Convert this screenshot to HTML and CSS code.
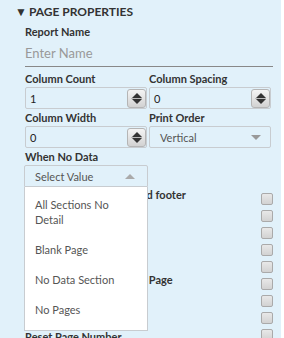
FILE: index.html
```html
<!DOCTYPE html>
<html lang="en">
<head>
  <meta charset="UTF-8">
  <title>Page Properties</title>
  <link rel="stylesheet" href="styles.css">
</head>
<body>

  <div class="panel">
    <div class="panel-title"><span class="caret">&#9660;</span>PAGE PROPERTIES</div>

    <div class="field">
      <label class="label">Report Name</label>
      <div class="text-input">Enter Name</div>
    </div>

    <div class="grid">
      <div class="field">
        <label class="label">Column Count</label>
        <div class="box">
          <span class="value">1</span>
          <span class="spinner"><i class="up"></i><i class="down"></i></span>
        </div>
      </div>
      <div class="field">
        <label class="label">Column Spacing</label>
        <div class="box">
          <span class="value">0</span>
          <span class="spinner"><i class="up"></i><i class="down"></i></span>
        </div>
      </div>
      <div class="field">
        <label class="label">Column Width</label>
        <div class="box">
          <span class="value">0</span>
          <span class="spinner"><i class="up"></i><i class="down"></i></span>
        </div>
      </div>
      <div class="field">
        <label class="label">Print Order</label>
        <div class="box select">
          <span class="value muted">Vertical</span>
          <span class="arrow-down"></span>
        </div>
      </div>
      <div class="field">
        <label class="label">When No Data</label>
        <div class="combo">
          <div class="box select open">
            <span class="value muted">Select Value</span>
            <span class="arrow-up"></span>
          </div>
          <ul class="dropdown">
            <li>All Sections No Detail</li>
            <li>Blank Page</li>
            <li>No Data Section</li>
            <li>No Pages</li>
          </ul>
        </div>
      </div>
    </div>

    <div class="checks">
      <div class="check-row"><span>Print all report header and footer</span><span class="checkbox"></span></div>
      <div class="check-row"><span>Ignore pagination</span><span class="checkbox"></span></div>
      <div class="check-row"><span>Float column footer</span><span class="checkbox"></span></div>
      <div class="check-row"><span>Title on new page</span><span class="checkbox"></span></div>
      <div class="check-row"><span>Summary on new page</span><span class="checkbox"></span></div>
      <div class="check-row"><span>Print Summary on a New Page</span><span class="checkbox"></span></div>
      <div class="check-row"><span>Summary with header</span><span class="checkbox"></span></div>
      <div class="check-row"><span>Keep together</span><span class="checkbox"></span></div>
      <div class="check-row last"><span>Reset Page Number</span><span class="checkbox"></span></div>
    </div>
  </div>

</body>
</html>
```

FILE: styles.css
```css
* {
  box-sizing: border-box;
}

body {
  margin: 0;
  padding: 0;
  background: #fff;
  font-family: Lato, "Open Sans", sans-serif;
  color: #333;
}

.panel {
  width: 281px;
  height: 338px;
  overflow: hidden;
  background: #e1f1fa;
  padding: 0 8px 0 25px;
}

.panel-title {
  height: 24px;
  line-height: 24px;
  margin-left: -10px;
  font-size: 12px;
  font-weight: 700;
  color: #333;
}

.caret {
  font-size: 12px;
  margin-right: 2px;
}

.label {
  display: block;
  height: 12px;
  line-height: 12px;
  font-size: 11px;
  font-weight: 700;
  color: #333;
}

.panel-title + .field .label {
  margin-top: 2px;
}

.text-input {
  height: 29px;
  line-height: 28px;
  padding-top: 1px;
  font-size: 13px;
  color: #999;
  border-bottom: 1px solid #888;
}

.grid {
  display: grid;
  grid-template-columns: 124px 124px;
  margin-top: 6px;
}

.grid .field {
  margin-bottom: 3px;
}

.grid .box {
  margin-top: 2px;
}

.box {
  display: flex;
  align-items: center;
  height: 22px;
  width: 122px;
  border: 1px solid #c8ccd0;
  border-radius: 2px;
  padding-left: 4px;
}

.value {
  flex-grow: 1;
  font-size: 11px;
  color: #222;
}

.muted {
  color: #555;
}

.select .value {
  padding-left: 6px;
}

.spinner {
  position: relative;
  width: 19px;
  height: 19px;
  border: 1px solid #b5b5b5;
  border-radius: 3px;
  background: linear-gradient(#f4f4f4, #d2d2d2);
  display: flex;
  flex-direction: column;
  align-items: center;
  justify-content: space-between;
  padding: 3px 0;
}

.spinner::after {
  content: "";
  position: absolute;
  left: 3px;
  right: 3px;
  top: 8px;
  height: 1px;
  background: #bbb;
}

.spinner .up,
.spinner .down {
  width: 0;
  height: 0;
  border-left: 5px solid transparent;
  border-right: 5px solid transparent;
}

.spinner .up {
  border-bottom: 5px solid #333;
}

.spinner .down {
  border-top: 5px solid #333;
}

.arrow-down,
.arrow-up {
  width: 0;
  height: 0;
  border-left: 5px solid transparent;
  border-right: 5px solid transparent;
}

.arrow-down {
  border-top: 5px solid #999;
  margin-right: 9px;
}

.arrow-up {
  border-bottom: 5px solid #aaa;
  margin-right: 12px;
}

.combo {
  position: relative;
}

.box.open {
  border-radius: 2px 2px 0 0;
  width: 124px;
  margin-left: -1px;
}

.dropdown {
  position: absolute;
  top: 100%;
  left: -1px;
  width: 124px;
  height: 144px;
  margin: 0;
  padding: 5px 0 0;
  list-style: none;
  background: #fff;
  border: 1px solid #c8ccd0;
  border-top: none;
  z-index: 10;
}

.dropdown li {
  font-size: 11px;
  line-height: 15px;
  color: #555;
  padding: 5px 30px 10px 10px;
}

.checks {
  margin-top: -1px;
}

.check-row {
  display: flex;
  justify-content: space-between;
  height: 17px;
  font-size: 11px;
  font-weight: 700;
  color: #333;
  line-height: 12px;
  white-space: nowrap;
}

.check-row.last span:first-child {
  padding-top: 6px;
}

.checkbox {
  flex-shrink: 0;
  width: 12px;
  height: 12px;
  margin-top: 4px;
  border: 1px solid #aaa;
  border-radius: 2px;
  background: linear-gradient(#e8e8e8, #d2d2d2);
}
```
